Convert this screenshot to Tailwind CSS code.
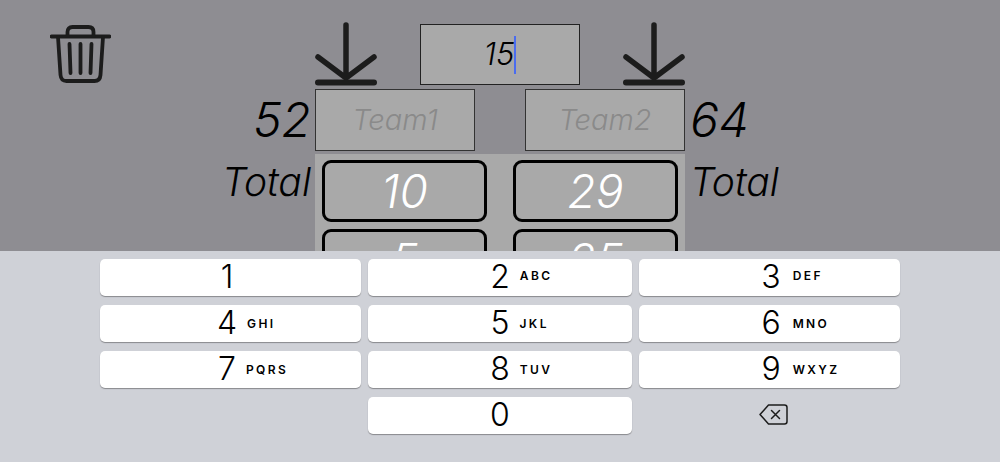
<!DOCTYPE html>
<html lang="en">

<head>
  <meta charset="UTF-8">
  <meta name="viewport" content="width=device-width, initial-scale=1.0">
  <title>Score keeper</title>
  <script src="https://cdn.jsdelivr.net/npm/@tailwindcss/browser@4"></script>
</head>

<body class="h-[462px] w-[1000px] overflow-hidden bg-[#cfd1d7] font-['Inter','Liberation_Sans',sans-serif] text-black">
  <!-- scoreboard, dimmed behind the keypad -->
  <main class="h-[251px] overflow-hidden bg-[#8e8d92]">
    <div class="grid h-[89px] grid-cols-[315px_370px_315px]">
      <div class="pl-[50px] pt-[25px]">
        <svg class="h-[58px] w-[61px]" viewBox="0 0 61 58" fill="none" stroke="#1c1c1c" stroke-width="3.8" stroke-linecap="round" stroke-linejoin="round">
          <path d="M1.5 11.5h58" />
          <path d="M17.5 11V7q0-5 5-5h16q5 0 5 5v4" />
          <path d="M8 12l2.500 38q.5 6 6 6h28q5.500 0 6-6L53 12" />
          <path d="M19.500 19l1 29M30.500 19v29M41.500 19l-1 29" />
        </svg>
      </div>
      <div class="flex justify-between">
        <svg class="mt-[22px] h-[64px] w-[62px]" viewBox="0 0 62 64" fill="none" stroke="#1c1c1c" stroke-linecap="round" stroke-linejoin="round">
          <path stroke-width="5.500" d="M31 3v53M3 35l28 21 28-21" />
          <path stroke-width="6" d="M3 60.500h56" />
        </svg>
        <div class="mt-[24px] flex h-[61px] w-[160px] items-center justify-center border border-[#222] bg-[#a9a9a9] text-[31px] font-light italic">15<span class="h-[38px] w-[2px] bg-[#4a6cf0]"></span></div>
        <svg class="mt-[22px] h-[64px] w-[62px]" viewBox="0 0 62 64" fill="none" stroke="#1c1c1c" stroke-linecap="round" stroke-linejoin="round">
          <path stroke-width="5.500" d="M31 3v53M3 35l28 21 28-21" />
          <path stroke-width="6" d="M3 60.500h56" />
        </svg>
      </div>
    </div>

    <div class="grid h-[65px] grid-cols-[315px_370px_315px]">
      <div class="pr-[4px] pt-[1px] text-right text-[48px] font-light leading-[60px] italic">52</div>
      <div class="flex justify-between">
        <div class="flex h-[62px] w-[160px] items-center justify-center border border-[#333] bg-[#a9a9a9] text-[29px] font-light italic text-[#8a8a8a]">Team1</div>
        <div class="flex h-[62px] w-[160px] items-center justify-center border border-[#333] bg-[#a9a9a9] text-[29px] font-light italic text-[#8a8a8a]">Team2</div>
      </div>
      <div class="pl-[5px] pt-[1px] text-[48px] font-light leading-[60px] italic">64</div>
    </div>

    <div class="grid grid-cols-[315px_370px_315px]">
      <div class="pr-[4px] text-right text-[39px] font-light leading-[56px] italic">Total</div>
      <div class="grid grid-cols-[165px_165px] justify-between gap-y-[7px] bg-[#a9a9a9] px-[7px] pt-[6px]">
        <div class="flex h-[62px] items-center justify-center rounded-[9px] border-[3.500px] border-black bg-[#a9a9a9] text-[46px] font-light italic text-white">10</div>
        <div class="flex h-[62px] items-center justify-center rounded-[9px] border-[3.500px] border-black bg-[#a9a9a9] text-[46px] font-light italic text-white">29</div>
        <div class="flex h-[62px] items-center justify-center rounded-[9px] border-[3.500px] border-black bg-[#a9a9a9] text-[46px] font-light italic text-white">5</div>
        <div class="flex h-[62px] items-center justify-center rounded-[9px] border-[3.500px] border-black bg-[#a9a9a9] text-[46px] font-light italic text-white">25</div>
      </div>
      <div class="pl-[5px] text-[39px] font-light leading-[56px] italic">Total</div>
    </div>
  </main>

  <!-- number pad -->
  <section class="grid grid-cols-[261px_264px_261px] justify-center gap-x-[7px] gap-y-[9px] pt-[8px]">
    <div class="grid h-[37px] grid-cols-[1fr_auto_1fr] items-center rounded-[5px] bg-white pb-[3px] pr-[7px] shadow-[0_1px_1px_#88898d]">
      <span></span><span class="text-[32px] font-light leading-[33px]">1</span><span></span>
    </div>
    <div class="grid h-[37px] grid-cols-[1fr_auto_1fr] items-center rounded-[5px] bg-white pb-[3px] shadow-[0_1px_1px_#88898d]">
      <span></span><span class="text-[32px] font-light leading-[33px]">2</span><span class="pl-[10px] text-[12px] font-semibold tracking-[0.2em]">ABC</span>
    </div>
    <div class="grid h-[37px] grid-cols-[1fr_auto_1fr] items-center rounded-[5px] bg-white pb-[3px] pl-[3px] shadow-[0_1px_1px_#88898d]">
      <span></span><span class="text-[32px] font-light leading-[33px]">3</span><span class="pl-[12px] text-[12px] font-semibold tracking-[0.2em]">DEF</span>
    </div>
    <div class="grid h-[37px] grid-cols-[1fr_auto_1fr] items-center rounded-[5px] bg-white pb-[3px] pr-[7px] shadow-[0_1px_1px_#88898d]">
      <span></span><span class="text-[32px] font-light leading-[33px]">4</span><span class="pl-[10px] pt-[3px] text-[12px] font-semibold tracking-[0.2em]">GHI</span>
    </div>
    <div class="grid h-[37px] grid-cols-[1fr_auto_1fr] items-center rounded-[5px] bg-white pb-[3px] shadow-[0_1px_1px_#88898d]">
      <span></span><span class="text-[32px] font-light leading-[33px]">5</span><span class="pl-[10px] pt-[3px] text-[12px] font-semibold tracking-[0.2em]">JKL</span>
    </div>
    <div class="grid h-[37px] grid-cols-[1fr_auto_1fr] items-center rounded-[5px] bg-white pb-[3px] pl-[3px] shadow-[0_1px_1px_#88898d]">
      <span></span><span class="text-[32px] font-light leading-[33px]">6</span><span class="pl-[12px] pt-[3px] text-[12px] font-semibold tracking-[0.2em]">MNO</span>
    </div>
    <div class="grid h-[37px] grid-cols-[1fr_auto_1fr] items-center rounded-[5px] bg-white pb-[3px] pr-[7px] shadow-[0_1px_1px_#88898d]">
      <span></span><span class="text-[32px] font-light leading-[33px]">7</span><span class="pl-[10px] pt-[3px] text-[12px] font-semibold tracking-[0.2em]">PQRS</span>
    </div>
    <div class="grid h-[37px] grid-cols-[1fr_auto_1fr] items-center rounded-[5px] bg-white pb-[3px] shadow-[0_1px_1px_#88898d]">
      <span></span><span class="text-[32px] font-light leading-[33px]">8</span><span class="pl-[10px] pt-[3px] text-[12px] font-semibold tracking-[0.2em]">TUV</span>
    </div>
    <div class="grid h-[37px] grid-cols-[1fr_auto_1fr] items-center rounded-[5px] bg-white pb-[3px] pl-[3px] shadow-[0_1px_1px_#88898d]">
      <span></span><span class="text-[32px] font-light leading-[33px]">9</span><span class="pl-[12px] pt-[3px] text-[12px] font-semibold tracking-[0.2em]">WXYZ</span>
    </div>
    <div></div>
    <div class="grid h-[37px] grid-cols-[1fr_auto_1fr] items-center rounded-[5px] bg-white pb-[3px] shadow-[0_1px_1px_#88898d]">
      <span></span><span class="text-[32px] font-light leading-[33px]">0</span><span></span>
    </div>
    <div class="flex h-[37px] items-center justify-center pb-[2px] pl-[7px]">
      <svg class="h-[21px] w-[29px]" viewBox="0 0 29 21" fill="none" stroke="#1c1c1c" stroke-width="1.500" stroke-linecap="round" stroke-linejoin="round">
        <path d="M9.500 1H25.500q2.500 0 2.500 2.500v14q0 2.500-2.500 2.500H9.500L1 10.500z" />
        <path d="M12.500 6.500l8 8M20.500 6.500l-8 8" />
      </svg>
    </div>
  </section>
</body>

</html>
